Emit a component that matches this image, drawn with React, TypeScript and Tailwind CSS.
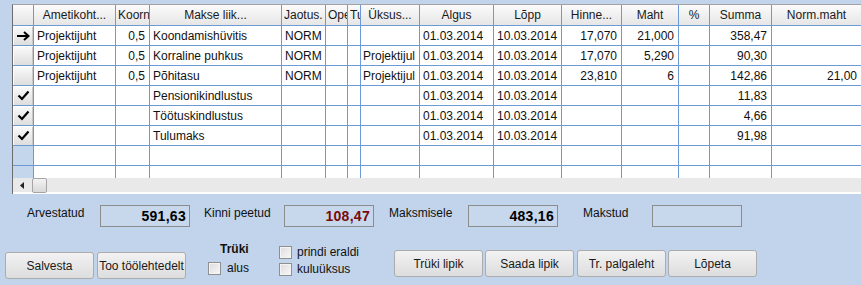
import React from "react";

type Col = { h: string; w: number; ha: "c" | "l"; da: "l" | "r" };

const cols: Col[] = [
  { h: "Ametikoht...", w: 82, ha: "c", da: "l" },
  { h: "Koorn", w: 34, ha: "l", da: "r" },
  { h: "Makse liik...", w: 132, ha: "c", da: "l" },
  { h: "Jaotus.", w: 44, ha: "l", da: "l" },
  { h: "Ope", w: 22, ha: "l", da: "l" },
  { h: "Tu", w: 13, ha: "l", da: "l" },
  { h: "Üksus...", w: 59, ha: "c", da: "l" },
  { h: "Algus", w: 74, ha: "c", da: "l" },
  { h: "Lõpp", w: 68, ha: "c", da: "l" },
  { h: "Hinne...", w: 60, ha: "c", da: "r" },
  { h: "Maht", w: 57, ha: "c", da: "r" },
  { h: "%", w: 31, ha: "c", da: "r" },
  { h: "Summa", w: 62, ha: "c", da: "r" },
  { h: "Norm.maht", w: 90, ha: "c", da: "r" },
];

type Row = { ind: "arrow" | "check" | "none" | "empty"; cells: string[] };

const D1 = "01.03.2014";
const D2 = "10.03.2014";

const rows: Row[] = [
  { ind: "arrow", cells: ["Projektijuht", "0,5", "Koondamishüvitis", "NORM", "", "", "", D1, D2, "17,070", "21,000", "", "358,47", ""] },
  { ind: "none", cells: ["Projektijuht", "0,5", "Korraline puhkus", "NORM", "", "", "Projektijul", D1, D2, "17,070", "5,290", "", "90,30", ""] },
  { ind: "none", cells: ["Projektijuht", "0,5", "Põhitasu", "NORM", "", "", "Projektijul", D1, D2, "23,810", "6", "", "142,86", "21,00"] },
  { ind: "check", cells: ["", "", "Pensionikindlustus", "", "", "", "", D1, D2, "", "", "", "11,83", ""] },
  { ind: "check", cells: ["", "", "Töötuskindlustus", "", "", "", "", D1, D2, "", "", "", "4,66", ""] },
  { ind: "check", cells: ["", "", "Tulumaks", "", "", "", "", D1, D2, "", "", "", "91,98", ""] },
  { ind: "empty", cells: Array(14).fill("") },
  { ind: "empty", cells: Array(14).fill("") },
];

function Arrow() {
  return (
    <svg width="14" height="10" viewBox="0 0 14 10">
      <path d="M1 5 H11" stroke="#000" strokeWidth="2" />
      <path d="M8 1 L12.5 5 L8 9" stroke="#000" strokeWidth="2" fill="none" />
    </svg>
  );
}

function Check() {
  return (
    <svg width="13" height="11" viewBox="0 0 13 11">
      <path d="M1.5 5.5 L5 9 L11.5 1.5" stroke="#000" strokeWidth="2.2" fill="none" />
    </svg>
  );
}

function Indicator({ kind }: { kind: Row["ind"] }) {
  if (kind === "empty") {
    return <div className="w-[21px] h-full shrink-0 bg-[#c4d6ec] border-r border-b border-[#6b9ad6]" />;
  }
  return (
    <div className="w-[21px] h-full shrink-0 flex items-center justify-center border-r border-b border-[#6b9ad6] bg-gradient-to-b from-[#fbfbfb] to-[#dedede] shadow-[inset_1px_1px_0_#ffffff,inset_-1px_0_0_#c8c8c8]">
      {kind === "arrow" && <Arrow />}
      {kind === "check" && <Check />}
    </div>
  );
}

function Btn({ label, className }: { label: string; className: string }) {
  return (
    <div
      className={
        "h-[27px] w-[89px] shrink-0 flex items-center justify-center rounded-[3px] border border-[#acacac] bg-gradient-to-b from-[#f2f2f2] to-[#dddddd] text-[12px] text-[#1a1a1a] " +
        className
      }
    >
      {label}
    </div>
  );
}

function Box() {
  return <div className="w-[13px] h-[13px] shrink-0 border border-[#8f8f8f] bg-gradient-to-br from-[#dcdcdc] to-[#f8f8f8] shadow-[inset_0_0_0_1px_#f4f4f4]" />;
}

function ValueBox({ value, color }: { value: string; color: string }) {
  return (
    <div className="w-[90px] h-[22px] shrink-0 border border-[#8c8c8c] bg-[#c7d8ed] flex items-center justify-end pr-[3px]">
      <span className={"text-[14px] font-bold tracking-[0.3px] " + color}>{value}</span>
    </div>
  );
}

export default function App() {
  return (
    <div className="w-[861px] h-[285px] overflow-hidden bg-[#c1d4eb] font-['Liberation_Sans',Arial,sans-serif] text-[12px] text-[#111]">
      {/* grid */}
      <div className="pt-[4px] pl-[12px]">
        <div className="w-[849px] border-t border-[#a3a3a3] border-l border-l-[#6c6c6c] bg-white overflow-hidden">
          {/* header */}
          <div className="flex h-[21px]">
            <div className="w-[21px] shrink-0 border-r border-b border-[#6b9ad6] bg-gradient-to-b from-[#fbfbfb] to-[#e4e4e4]" />
            {cols.map((c, i) => (
              <div
                key={i}
                style={{ width: c.w }}
                className={
                  "shrink-0 flex items-center overflow-hidden whitespace-nowrap border-r border-b border-[#6b9ad6] bg-gradient-to-b from-[#fbfbfb] to-[#e6e6e6] text-[#1a1a1a] " +
                  (c.ha === "c" ? "justify-center" : "justify-start pl-[2px]")
                }
              >
                {c.h}
              </div>
            ))}
          </div>
          {/* body */}
          <div className="h-[152px] overflow-hidden">
            {rows.map((r, ri) => (
              <div key={ri} className="flex h-[20px]">
                <Indicator kind={r.ind} />
                {cols.map((c, ci) => (
                  <div
                    key={ci}
                    style={{ width: c.w }}
                    className={
                      "shrink-0 flex items-center overflow-hidden whitespace-nowrap border-r border-b border-[#6b9ad6] " +
                      (c.da === "r" ? "justify-end pr-[4px]" : ci === 6 ? "justify-start pl-[2px]" : "justify-start pl-[3px]")
                    }
                  >
                    {r.cells[ci]}
                  </div>
                ))}
              </div>
            ))}
          </div>
          {/* scrollbar */}
          <div className="h-[16px] bg-[#e9e9e9] flex items-center border-b-2 border-white">
            <div className="w-[19px] flex items-center justify-center">
              <svg width="5" height="7" viewBox="0 0 5 7">
                <path d="M4 0 L0 3.5 L4 7 Z" fill="#222" />
              </svg>
            </div>
            <div className="w-[15px] h-[15px] rounded-[2px] border border-[#a5a5a5] bg-gradient-to-b from-[#f3f3f3] to-[#d9d9d9]" />
          </div>
        </div>
      </div>

      {/* summary row */}
      <div className="flex items-start mt-[11px]">
        <span className="ml-[27px] w-[73px] leading-[16px]">Arvestatud</span>
        <ValueBox value="591,63" color="text-black" />
        <span className="ml-[14px] w-[80px] leading-[16px]">Kinni peetud</span>
        <ValueBox value="108,47" color="text-[#7a0a0a]" />
        <span className="ml-[15px] w-[79px] leading-[16px]">Maksmisele</span>
        <ValueBox value="483,16" color="text-black" />
        <span className="ml-[25px] w-[69px] leading-[16px]">Makstud</span>
        <ValueBox value="" color="text-black" />
      </div>

      {/* bottom controls */}
      <div className="flex items-start mt-[14px]">
        <Btn label="Salvesta" className="ml-[5px] mt-[11px] w-[88px]" />
        <Btn label="Too töölehtedelt" className="ml-[3px] mt-[11px]" />
        <div className="ml-[22px] w-[71px] flex flex-col">
          <span className="ml-[12px] font-bold leading-[14px] mt-[1px]">Trüki</span>
          <div className="flex items-center mt-[5px]">
            <Box />
            <span className="ml-[6px] leading-[14px]">alus</span>
          </div>
        </div>
        <div className="w-[115px] flex flex-col">
          <div className="flex items-center mt-[4px]">
            <Box />
            <span className="ml-[5px] leading-[14px]">prindi eraldi</span>
          </div>
          <div className="flex items-center mt-[3px]">
            <Box />
            <span className="ml-[5px] leading-[14px]">kuluüksus</span>
          </div>
        </div>
        <Btn label="Trüki lipik" className="mt-[9px]" />
        <Btn label="Saada lipik" className="ml-[2px] mt-[9px]" />
        <Btn label="Tr. palgaleht" className="ml-[3px] mt-[9px]" />
        <Btn label="Lõpeta" className="ml-[2px] mt-[9px]" />
      </div>
    </div>
  );
}
